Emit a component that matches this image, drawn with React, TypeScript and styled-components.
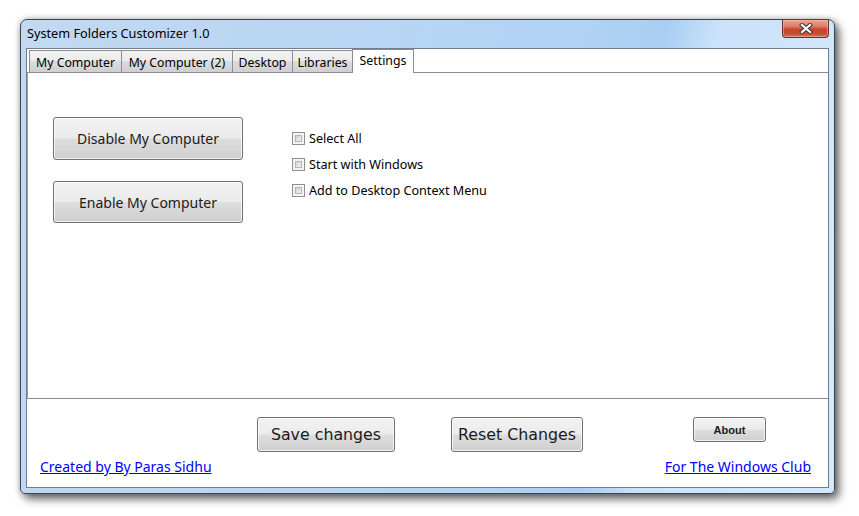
import React from "react";
import styled, { createGlobalStyle } from "styled-components";

const GlobalStyle = createGlobalStyle`
  html, body {
    margin: 0;
    padding: 0;
    background: #ffffff;
  }
  body {
    font-family: "Noto Sans", "Open Sans", sans-serif;
  }
`;

const Desktop = styled.div`
  width: 859px;
  height: 516px;
  padding: 19px 0 0 20px;
  box-sizing: border-box;
  background: #ffffff;
`;

const Window = styled.div`
  width: 815px;
  height: 475px;
  box-sizing: border-box;
  border: 1px solid #3c4550;
  border-radius: 7px 7px 5px 5px;
  background: linear-gradient(
    100deg,
    #c2d9f1 0%,
    #b9d5f2 35%,
    #b2d3f5 62%,
    #a9cdf2 72%,
    #cbe2fa 78%,
    #d6e9fc 100%
  );
  box-shadow: 4px 5px 10px rgba(0, 0, 0, 0.6), 0 0 6px rgba(0, 0, 0, 0.25);
  display: flex;
  flex-direction: column;
`;

const TitleBar = styled.div`
  height: 28px;
  display: flex;
  justify-content: space-between;
  align-items: flex-start;
  padding: 0 5px 0 6px;
  flex-shrink: 0;
`;

const Title = styled.span`
  margin-top: 5px;
  font-family: "Noto Sans", sans-serif;
  font-size: 12.7px;
  line-height: 16px;
  color: #000000;
`;

const CloseButton = styled.div`
  width: 47px;
  height: 18px;
  box-sizing: border-box;
  border: 1px solid #6a3028;
  border-top: none;
  border-radius: 0 0 4px 4px;
  background: linear-gradient(
    #e8a393 0%,
    #dc826f 35%,
    #c8452d 55%,
    #c24f37 80%,
    #d7745c 100%
  );
  display: flex;
  align-items: center;
  justify-content: center;
  box-shadow: inset 0 0 0 1px rgba(255, 200, 190, 0.45);
`;

const Client = styled.div`
  flex: 1;
  margin: 0 5px 5px 5px;
  background: #ffffff;
  border: 1px solid #6f7c8c;
  display: flex;
  flex-direction: column;
`;

const TabStrip = styled.div`
  height: 23px;
  display: flex;
  align-items: flex-end;
  padding-left: 2px;
  flex-shrink: 0;
`;

const Tab = styled.div<{ $w: number; $active?: boolean }>`
  width: ${(p) => p.$w}px;
  height: ${(p) => (p.$active ? 24 : 22)}px;
  margin-bottom: ${(p) => (p.$active ? -1 : 0)}px;
  margin-left: -1px;
  box-sizing: border-box;
  border: 1px solid ${(p) => (p.$active ? "#898c95" : "#8c8e93")};
  border-bottom: none;
  background: ${(p) =>
    p.$active
      ? "#ffffff"
      : "linear-gradient(#f2f2f2 0%, #ebebeb 50%, #dddddd 50%, #cfcfcf 100%)"};
  font-family: "Noto Sans", sans-serif;
  font-size: 12.3px;
  color: #000000;
  display: flex;
  justify-content: center;
  align-items: ${(p) => (p.$active ? "flex-start" : "center")};
  padding-top: ${(p) => (p.$active ? 2 : 1)}px;
  position: relative;
  z-index: ${(p) => (p.$active ? 1 : 0)};
  &:first-child {
    margin-left: 0;
  }
`;

const TabPanel = styled.div`
  height: 327px;
  box-sizing: border-box;
  border-top: 1px solid #898c95;
  border-bottom: 1px solid #898c95;
  border-left: 1px solid #a0a0a0;
  padding: 44px 0 0 25px;
  display: flex;
  gap: 49px;
  flex-shrink: 0;
`;

const ButtonColumn = styled.div`
  width: 190px;
  display: flex;
  flex-direction: column;
  gap: 21px;
`;

const PushButton = styled.button<{
  $w: number;
  $h: number;
  $size: number;
  $font?: string;
  $bold?: boolean;
}>`
  width: ${(p) => p.$w}px;
  height: ${(p) => p.$h}px;
  box-sizing: border-box;
  padding: 0;
  border: 1px solid #707070;
  border-radius: 3px;
  background: linear-gradient(
    #f2f2f2 0%,
    #ebebeb 48%,
    #dddddd 52%,
    #cfcfcf 100%
  );
  box-shadow: inset 0 0 0 1px rgba(255, 255, 255, 0.7);
  font-family: ${(p) => p.$font || '"Noto Sans", sans-serif'};
  font-size: ${(p) => p.$size}px;
  font-weight: ${(p) => (p.$bold ? 700 : 400)};
  color: #1b1b1b;
  display: flex;
  align-items: center;
  justify-content: center;
`;

const OptionColumn = styled.div`
  display: flex;
  flex-direction: column;
  padding-top: 8px;
`;

const OptionRow = styled.label`
  height: 26px;
  display: flex;
  align-items: center;
  gap: 4px;
  font-family: "Noto Sans", sans-serif;
  font-size: 12.6px;
  color: #000000;
`;

const CheckBox = styled.span`
  width: 13px;
  height: 13px;
  box-sizing: border-box;
  border: 1px solid #8e8f8f;
  background: #f4f4f4;
  padding: 2px;
  &::after {
    content: "";
    display: block;
    width: 100%;
    height: 100%;
    box-sizing: border-box;
    border: 1px solid #b4b4b4;
    background: linear-gradient(135deg, #d2d2d2 0%, #e6e6e6 60%, #f2f2f2 100%);
  }
`;

const Footer = styled.div`
  flex: 1;
  padding-top: 18px;
  display: flex;
  flex-direction: column;
`;

const ActionRow = styled.div`
  display: flex;
  align-items: flex-start;
  padding-left: 230px;
  gap: 56px;
`;

const AboutSlot = styled.div`
  margin-left: 54px;
`;

const LinkRow = styled.div`
  margin-top: 5px;
  display: flex;
  justify-content: space-between;
  padding: 0 17px 0 13px;
`;

const Link = styled.a`
  font-family: "Noto Sans", sans-serif;
  font-size: 14px;
  line-height: 19px;
  color: #0000ff;
  text-decoration: underline;
  cursor: pointer;
`;

const CloseGlyph = () => (
  <svg width="14" height="11" viewBox="0 0 14 11">
    <path
      d="M3 2 L11 9 M11 2 L3 9"
      stroke="#3b3b3b"
      strokeWidth="4.2"
      strokeLinecap="square"
    />
    <path
      d="M3 2 L11 9 M11 2 L3 9"
      stroke="#ffffff"
      strokeWidth="2.2"
      strokeLinecap="square"
    />
  </svg>
);

const tabs = [
  { label: "My Computer", w: 93 },
  { label: "My Computer (2)", w: 112 },
  { label: "Desktop", w: 61 },
  { label: "Libraries", w: 61 },
  { label: "Settings", w: 62, active: true },
];

const options = ["Select All", "Start with Windows", "Add to Desktop Context Menu"];

const century = '"DejaVu Sans", "Noto Sans", sans-serif';

export default function App() {
  return (
    <>
      <GlobalStyle />
      <Desktop>
        <Window>
          <TitleBar>
            <Title>System Folders Customizer 1.0</Title>
            <CloseButton>
              <CloseGlyph />
            </CloseButton>
          </TitleBar>
          <Client>
            <TabStrip>
              {tabs.map((t) => (
                <Tab key={t.label} $w={t.w} $active={t.active}>
                  {t.label}
                </Tab>
              ))}
            </TabStrip>
            <TabPanel>
              <ButtonColumn>
                <PushButton $w={190} $h={43} $size={14}>
                  Disable My Computer
                </PushButton>
                <PushButton $w={190} $h={42} $size={14}>
                  Enable My Computer
                </PushButton>
              </ButtonColumn>
              <OptionColumn>
                {options.map((o) => (
                  <OptionRow key={o}>
                    <CheckBox />
                    {o}
                  </OptionRow>
                ))}
              </OptionColumn>
            </TabPanel>
            <Footer>
              <ActionRow>
                <PushButton $w={138} $h={35} $size={15.8} $font={century}>
                  Save changes
                </PushButton>
                <PushButton $w={132} $h={35} $size={15.8} $font={century}>
                  Reset Changes
                </PushButton>
                <AboutSlot>
                  <PushButton
                    $w={73}
                    $h={25}
                    $size={11}
                    $bold
                    $font={'"Liberation Sans", sans-serif'}
                  >
                    About
                  </PushButton>
                </AboutSlot>
              </ActionRow>
              <LinkRow>
                <Link>Created by By Paras Sidhu</Link>
                <Link>For The Windows Club</Link>
              </LinkRow>
            </Footer>
          </Client>
        </Window>
      </Desktop>
    </>
  );
}
